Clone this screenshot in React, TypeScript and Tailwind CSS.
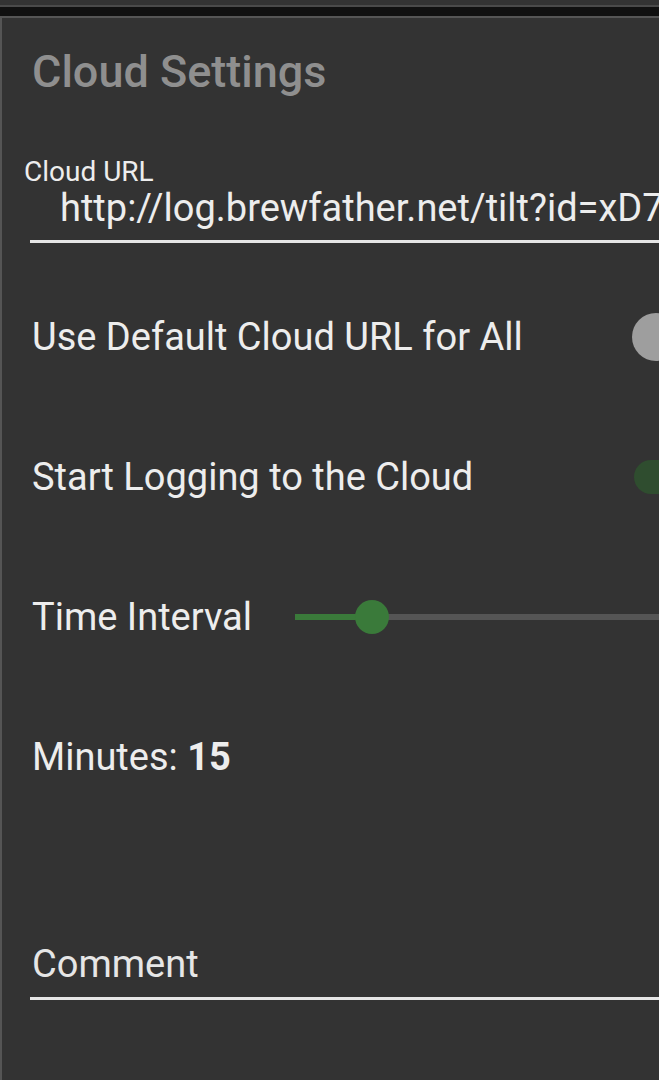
const font = "font-['Roboto',sans-serif]"

function Switch({ on }: { on: boolean }) {
  return (
    <div className="relative h-[48px] w-[27px] shrink-0">
      {on ? (
        <div className="absolute left-[2px] top-[7px] h-[34px] w-[80px] rounded-full bg-[#2f4d2f]" />
      ) : (
        <div className="absolute left-0 top-0 h-[48px] w-[48px] rounded-full bg-[#9e9e9e]" />
      )}
    </div>
  )
}

export default function App() {
  return (
    <div className={`${font} h-[1080px] w-[659px] overflow-hidden bg-[#333333] text-[#ededed]`}>
      <div className="h-[5px] bg-[#333333]" />
      <div className="h-[2px] bg-[#4a4a4a]" />
      <div className="h-[9px] bg-[#101010]" />
      <div className="h-[1064px] overflow-hidden border-l-2 border-t-2 border-[#555555] bg-[#333333]">
        <div className="h-[140px] pl-[30px] pt-[26px]">
          <h1 className="text-[45px] font-medium leading-[56px] text-[#8f8f8f]">
            Cloud Settings
          </h1>
        </div>

        <div className="pl-[22px]">
          <div className="text-[28px] leading-[28px]">Cloud URL</div>
          <div className="whitespace-nowrap pl-[36px] text-[38px] leading-[44px]">
            http://log.brewfather.net/tilt?id=xD7
          </div>
          <div className="ml-[6px] mt-[10px] h-[3px] bg-[#e6e6e6]" />
        </div>

        <div className="mt-[70px] flex h-[48px] items-center justify-between pl-[30px]">
          <span className="text-[38px]">Use Default Cloud URL for All</span>
          <Switch on={false} />
        </div>

        <div className="mt-[92px] flex h-[48px] items-center justify-between pl-[30px]">
          <span className="text-[38px]">Start Logging to the Cloud</span>
          <Switch on />
        </div>

        <div className="mt-[92px] flex h-[48px] items-center pl-[30px]">
          <span className="w-[263px] shrink-0 text-[38px]">Time Interval</span>
          <div className="relative h-[34px] flex-1">
            <div className="absolute left-0 right-0 top-[14px] h-[6px] bg-[#555555]" />
            <div className="absolute left-0 top-[14px] h-[6px] w-[77px] bg-[#3a7a3a]" />
            <div className="absolute left-[60px] top-0 h-[34px] w-[34px] rounded-full bg-[#3a7a3a]" />
          </div>
        </div>

        <div className="mt-[92px] flex h-[48px] items-center pl-[30px] text-[38px]">
          Minutes:&nbsp;<span className="font-bold">15</span>
        </div>

        <div className="mt-[159px] pl-[28px]">
          <div className="pl-[2px] text-[38px] leading-[48px] text-[#e6e6e6]">Comment</div>
          <div className="mt-[9px] h-[3px] bg-[#e6e6e6]" />
        </div>
      </div>
    </div>
  )
}
